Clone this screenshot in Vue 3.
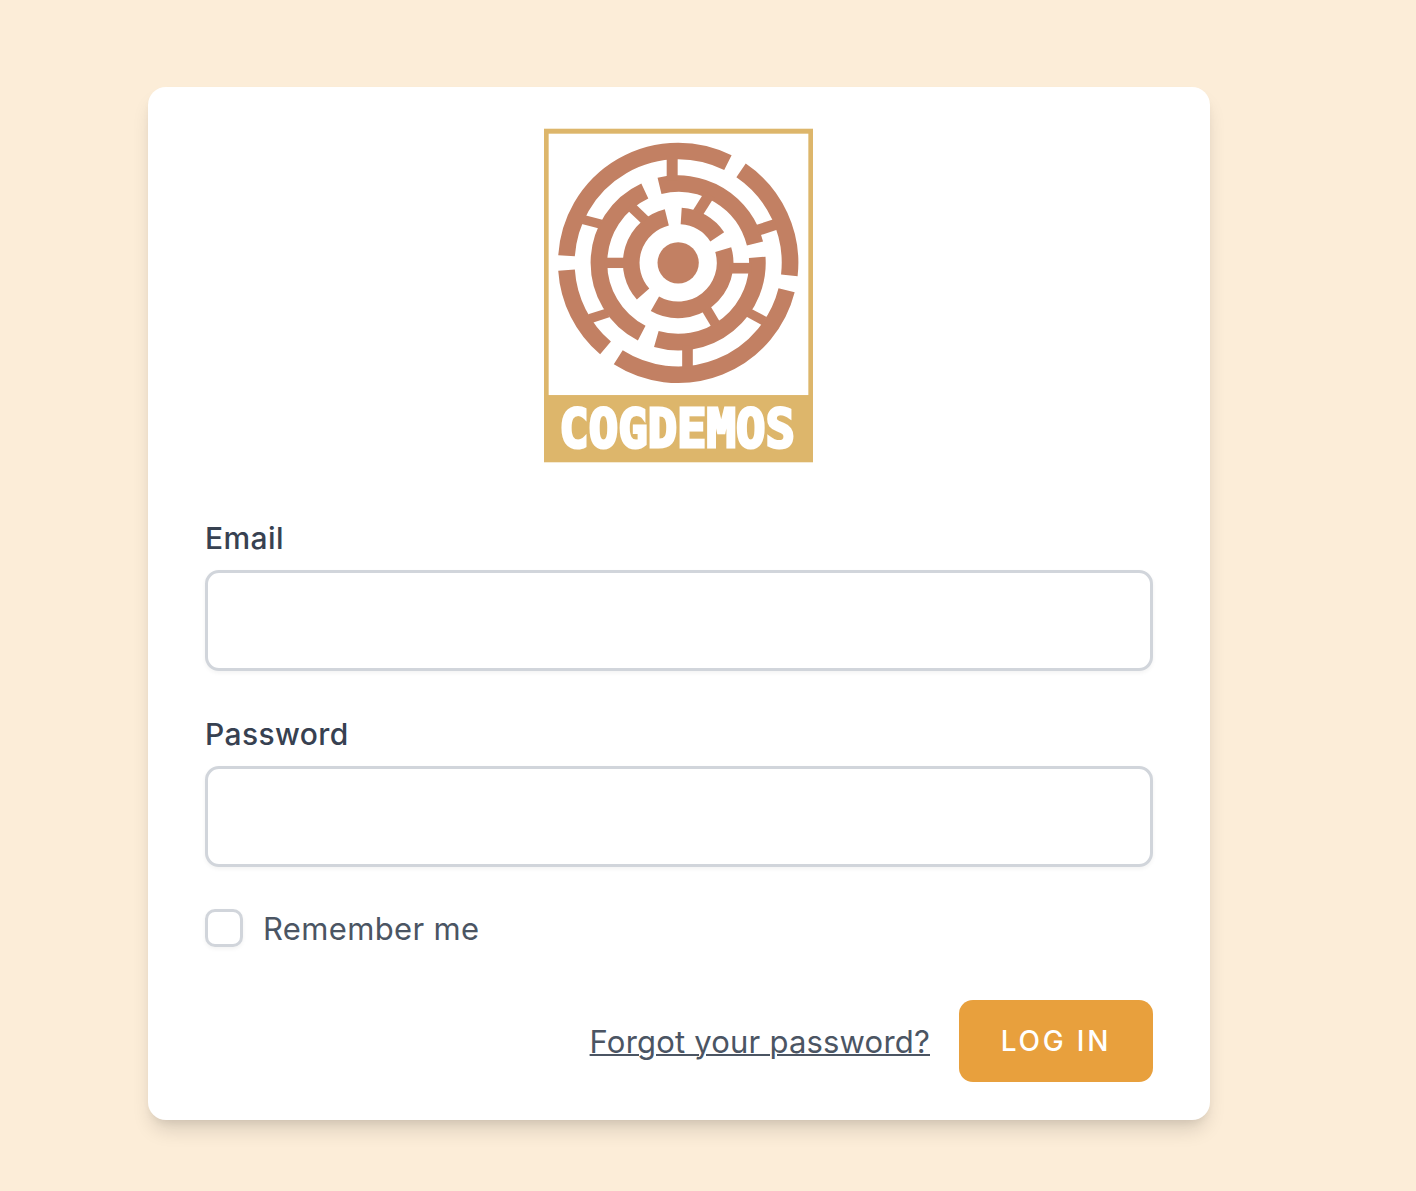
<script setup>
const cx = 431, cy = 428
const pt = (r, a) => {
  const t = (a * Math.PI) / 180
  return [cx + r * Math.sin(t), cy - r * Math.cos(t)]
}
const arc = (r, from, to) => {
  const [x1, y1] = pt(r, from)
  const [x2, y2] = pt(r, to)
  const large = ((to - from + 360) % 360) > 180 ? 1 : 0
  return `M${x1.toFixed(1)} ${y1.toFixed(1)}A${r} ${r} 0 ${large} 1 ${x2.toFixed(1)} ${y2.toFixed(1)}`
}
const arcs = [
  arc(336, 34.2, 96.4), arc(336, 104.2, 212.4), arc(336, 220.5, 266.3), arc(336, 273.6, 26.4),
  arc(238, 346.4, 75.8), arc(238, 86, 196), arc(238, 207.4, 335.1),
  arc(141, 228.4, 346), arc(141, 3.7, 56.3), arc(141, 73.6, 209.7)
]
const spokes = [
  [413, 105, 413, 180, 33], [670, 330, 725, 312, 33], [642, 577, 690, 603, 28], [459, 675, 459, 745, 32],
  [165, 596, 220, 578, 28], [145, 298, 200, 312, 28], [286, 256, 332, 300, 30], [210, 428, 275, 428, 31],
  [525, 222, 490, 278, 33], [585, 444, 650, 444, 32], [515, 565, 546, 617, 30]
]
</script>

<template>
  <main class="page">
    <section class="card">
      <svg class="logo" viewBox="28 25 808 1002" role="img" aria-label="Cogdemos">
        <rect x="28" y="25" width="808" height="1002" fill="#ddb66b" />
        <rect x="42" y="40" width="780" height="785" fill="#fff" />
        <g fill="none" stroke="#c28063">
          <path v-for="(d, i) in arcs" :key="i" :d="d" stroke-width="50" />
          <line
            v-for="(s, i) in spokes"
            :key="'s' + i"
            :x1="s[0]"
            :y1="s[1]"
            :x2="s[2]"
            :y2="s[3]"
            :stroke-width="s[4]"
          />
        </g>
        <circle :cx="cx" :cy="cy" r="62" fill="#c28063" />
        <text class="logo-text" transform="translate(74 980) scale(0.93 1)">COGDEMOS</text>
      </svg>

      <form class="form" @submit.prevent>
        <label class="label" for="email">Email</label>
        <input id="email" class="input" type="email" />

        <label class="label label-next" for="password">Password</label>
        <input id="password" class="input" type="password" />

        <label class="remember">
          <input class="check" type="checkbox" />
          <span>Remember me</span>
        </label>

        <div class="actions">
          <a class="forgot" href="#">Forgot your password?</a>
          <button class="submit" type="submit">LOG IN</button>
        </div>
      </form>
    </section>
  </main>
</template>

<style>
html, body { margin: 0; background: #fcedd8; }
</style>

<style scoped>
.page {
  box-sizing: border-box;
  min-height: 1191px;
  padding: 87px 0 0 148px;
  background: #fcedd8;
  font-family: Inter, "Noto Sans", sans-serif;
}
.card {
  box-sizing: border-box;
  width: 1062px;
  height: 1033px;
  padding: 41px 57px 0;
  background: #fff;
  border-radius: 18px;
  box-shadow: 0 13px 20px -4px rgba(0, 0, 0, 0.14), 0 5px 9px -3px rgba(0, 0, 0, 0.07);
}
.logo {
  display: block;
  width: 269px;
  height: 335px;
  margin-left: 339px;
}
.logo-text {
  font-family: "DejaVu Sans Mono", monospace;
  font-weight: 700;
  font-size: 158px;
  fill: #fff;
  stroke: #fff;
  stroke-width: 9px;
  stroke-linejoin: miter;
}
.form {
  display: flex;
  flex-direction: column;
  margin-top: 55px;
}
.label {
  font-size: 30px;
  line-height: 40px;
  font-weight: 500;
  letter-spacing: 0.4px;
  color: #374151;
  margin-bottom: 12px;
}
.label-next { margin-top: 43px; }
.input {
  box-sizing: border-box;
  width: 948px;
  height: 101px;
  border: 3px solid #d1d5db;
  border-radius: 14px;
  background: #fff;
  box-shadow: 0 2px 4px rgba(0, 0, 0, 0.05);
  outline: none;
}
.remember {
  display: flex;
  align-items: center;
  gap: 20px;
  margin-top: 42px;
  font-size: 31px;
  letter-spacing: 0.35px;
  color: #4b5563;
}
.check {
  appearance: none;
  box-sizing: border-box;
  width: 38px;
  height: 38px;
  margin: 0;
  border: 3px solid #d1d5db;
  border-radius: 10px;
  background: #fff;
  box-shadow: 0 2px 4px rgba(0, 0, 0, 0.05);
}
.actions {
  display: flex;
  align-items: center;
  justify-content: flex-end;
  gap: 29px;
  margin-top: 53px;
}
.forgot {
  font-size: 31px;
  letter-spacing: 0.2px;
  color: #4b5563;
  text-decoration: underline;
  text-decoration-thickness: 2px;
}
.submit {
  width: 194px;
  height: 82px;
  border: 0;
  border-radius: 14px;
  background: #e8a03d;
  color: #fff;
  font-family: inherit;
  font-size: 28px;
  font-weight: 500;
  letter-spacing: 2.8px;
}
</style>
